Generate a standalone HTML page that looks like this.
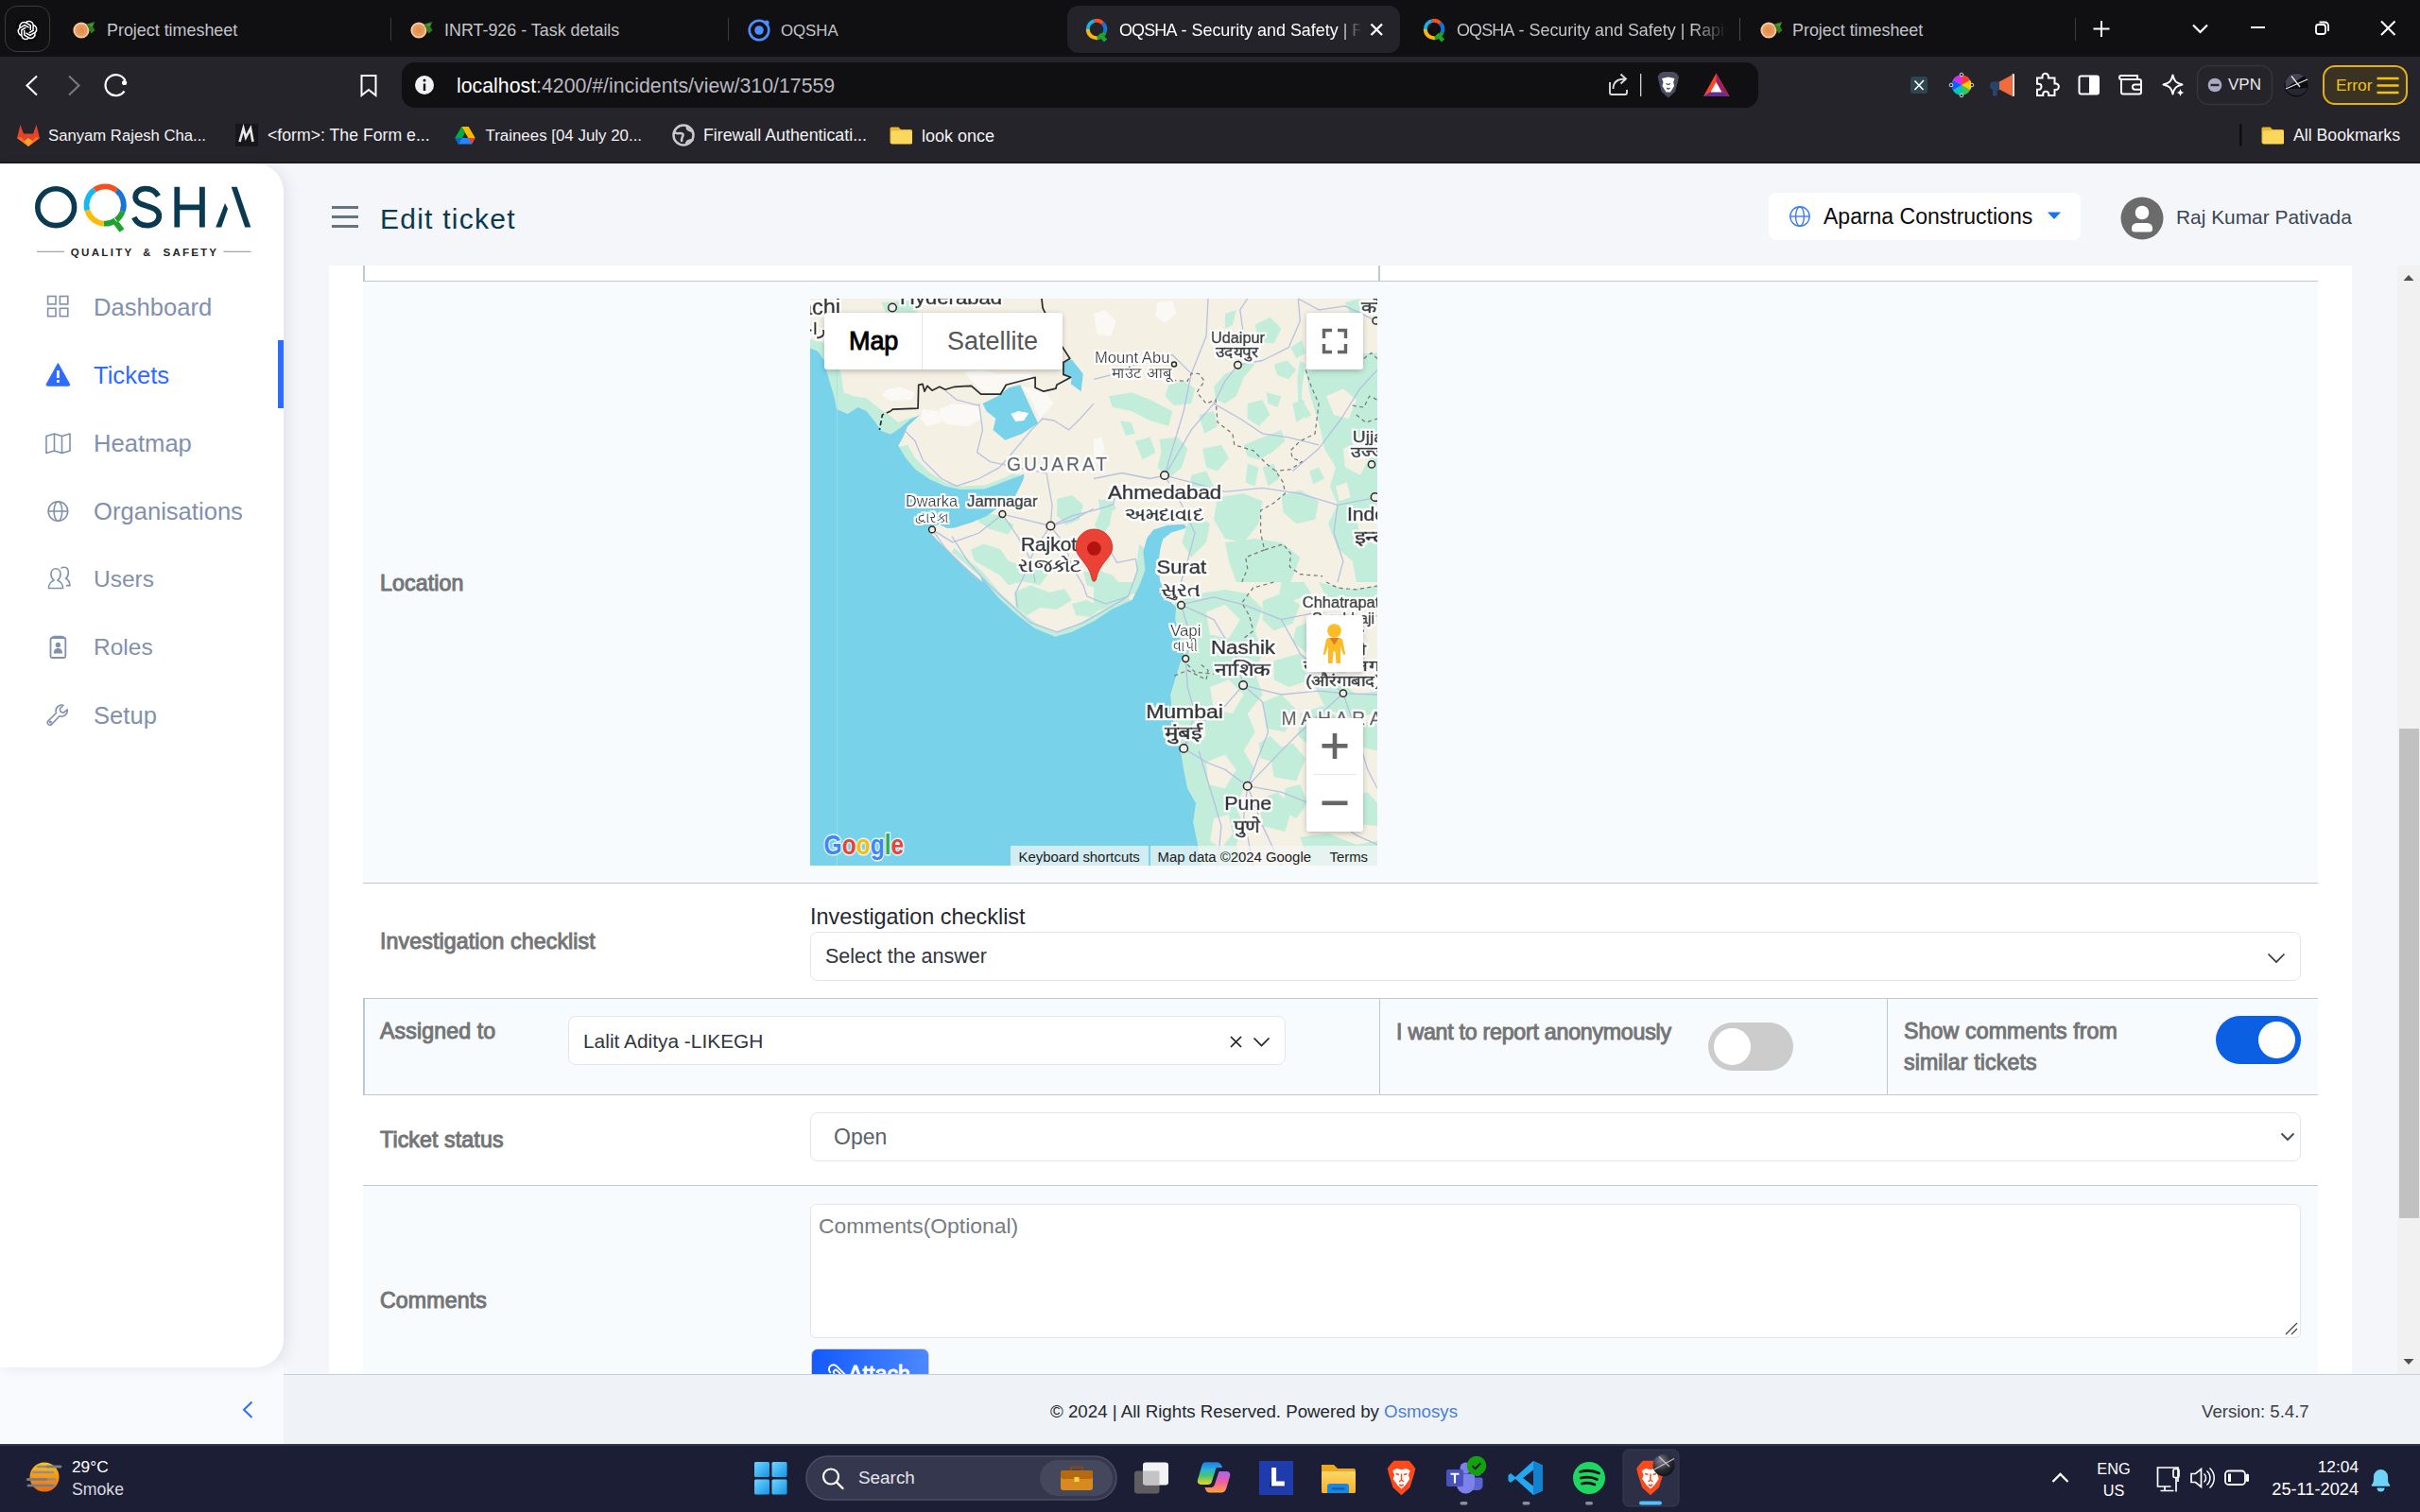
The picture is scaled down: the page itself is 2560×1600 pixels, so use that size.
<!DOCTYPE html>
<html lang="en">
<head>
<meta charset="utf-8">
<title>OQSHA - Security and Safety</title>
<style>
*{box-sizing:border-box;margin:0;padding:0}
html,body{width:2560px;height:1600px;overflow:hidden;background:#f4f6fa;font-family:"Liberation Sans",sans-serif;}
.abs{position:absolute}
#root{position:relative;width:2560px;height:1600px;overflow:hidden}
/* ---------- browser chrome ---------- */
#tabbar{left:0;top:0;width:2560px;height:60px;background:#101013}
#toolbar{left:0;top:60px;width:2560px;height:113px;background:#25242a}
.tabtxt{font-size:17.9px;line-height:1;color:#c4c4ca;white-space:nowrap;top:24.3px}
.bm{font-size:17.6px;line-height:1;color:#f2f2f4;white-space:nowrap;top:135px}
/* ---------- app ---------- */
#sidebar{left:0;top:173px;width:300px;height:1274px;background:#fff;border-radius:0 30px 30px 0;box-shadow:5px 2px 14px rgba(45,50,75,.085)}
.nav{font-size:25.6px;line-height:32px;color:#8290b0;left:99px;white-space:nowrap}
.lbl{font-size:23.2px;line-height:32px;color:#747577;-webkit-text-stroke:1px #747577;white-space:nowrap;letter-spacing:.1px}
.hl{background:#bfc9d2;height:1.3px}
.vl{background:#bfc9d2;width:1.3px}
.inp{background:#fff;border:1.5px solid #e3e6ea;border-radius:8px}
/* ---------- taskbar ---------- */
#taskbar{left:0;top:1528px;width:2560px;height:72px;background:#1c1e35}
.tb{color:#fff;font-size:18.5px;white-space:nowrap}
</style>
</head>
<body>
<div id="root">

<!-- ======= BROWSER CHROME ======= -->
<div id="tabbar" class="abs"></div>
<div id="toolbar" class="abs"></div>
<!--CHROME-START-->
<!-- tab strip -->
<div class="abs" style="left:5px;top:6px;width:48px;height:49px;border:1.5px solid #3a3a41;border-radius:13px"></div>
<div class="abs" style="left:17px;top:20px;width:24px;height:24px;border-radius:5px;background:#0b0b0d"></div>
<svg class="abs" style="left:17px;top:20px" width="24" height="24" viewBox="-12 -12 24 24" fill="none" stroke="#fff" stroke-width="1.5">
 <path d="M-1.5,-8.3 a4.6,4.6 0 0 1 7.6,2.2 l0,6.3 l-4.4,2.6"/>
 <g transform="rotate(60)"><path d="M-1.5,-8.3 a4.6,4.6 0 0 1 7.6,2.2 l0,6.3 l-4.4,2.6"/></g><g transform="rotate(120)"><path d="M-1.5,-8.3 a4.6,4.6 0 0 1 7.6,2.2 l0,6.3 l-4.4,2.6"/></g><g transform="rotate(180)"><path d="M-1.5,-8.3 a4.6,4.6 0 0 1 7.6,2.2 l0,6.3 l-4.4,2.6"/></g><g transform="rotate(240)"><path d="M-1.5,-8.3 a4.6,4.6 0 0 1 7.6,2.2 l0,6.3 l-4.4,2.6"/></g><g transform="rotate(300)"><path d="M-1.5,-8.3 a4.6,4.6 0 0 1 7.6,2.2 l0,6.3 l-4.4,2.6"/></g>
</svg>
<svg class="abs" style="left:0;top:0" width="2560" height="60">
 <g transform="translate(86,32)"><circle cx="0" cy="0" r="8.6" fill="#f3c9a2"/><circle cx="0" cy="0" r="6.6" fill="#e89a5e"/><circle cx="0" cy="0" r="3" fill="#e38f50"/>
   <path d="M5.5,-6.5 L14.5,-9 L12,-4 L14.5,0 L10.5,3.5 Z" fill="#2f7d1f"/><path d="M7,-6 L13,-7.5 L11.5,-3.5 Z" fill="#4c9a2a"/></g><g transform="translate(443,32)"><circle cx="0" cy="0" r="8.6" fill="#f3c9a2"/><circle cx="0" cy="0" r="6.6" fill="#e89a5e"/><circle cx="0" cy="0" r="3" fill="#e38f50"/>
   <path d="M5.5,-6.5 L14.5,-9 L12,-4 L14.5,0 L10.5,3.5 Z" fill="#2f7d1f"/><path d="M7,-6 L13,-7.5 L11.5,-3.5 Z" fill="#4c9a2a"/></g><g transform="translate(1871,32)"><circle cx="0" cy="0" r="8.6" fill="#f3c9a2"/><circle cx="0" cy="0" r="6.6" fill="#e89a5e"/><circle cx="0" cy="0" r="3" fill="#e38f50"/>
   <path d="M5.5,-6.5 L14.5,-9 L12,-4 L14.5,0 L10.5,3.5 Z" fill="#2f7d1f"/><path d="M7,-6 L13,-7.5 L11.5,-3.5 Z" fill="#4c9a2a"/></g>
 <rect x="413" y="19" width="1" height="24" fill="#3b3b41"/><rect x="770" y="19" width="1" height="24" fill="#3b3b41"/>
 <rect x="1840" y="19" width="1" height="24" fill="#4a4a50"/><rect x="2195" y="19" width="1" height="24" fill="#3b3b41"/>
 <!-- ionic icon -->
 <circle cx="803" cy="32" r="10.3" fill="none" stroke="#4d8dff" stroke-width="2.6"/><circle cx="803" cy="32" r="4.8" fill="#4d8dff"/><circle cx="811" cy="24" r="2.6" fill="#4d8dff"/>
 <!-- active tab -->
 <path d="M1129,18 a12,12 0 0 1 12,-12 h328 a12,12 0 0 1 12,12 v26 a12,12 0 0 1 -12,12 h-328 a12,12 0 0 1 -12,-12z" fill="#242329"/>
 <g transform="translate(1160,31)"><path d="M-9.2,0 A9.2,9.2 0 0 1 -2.4,-8.9" fill="none" stroke="#12b5ea" stroke-width="4"/>
   <path d="M-2.4,-8.9 A9.2,9.2 0 0 1 6.5,-6.5" fill="none" stroke="#f4511e" stroke-width="4"/>
   <path d="M6.5,-6.5 A9.2,9.2 0 0 1 8.6,3.3" fill="none" stroke="#1a73d9" stroke-width="4"/>
   <path d="M8.6,3.3 A9.2,9.2 0 0 1 0.8,9.2" fill="none" stroke="#1fa22e" stroke-width="4"/>
   <path d="M0.8,9.2 A9.2,9.2 0 0 1 -9.2,0" fill="none" stroke="#f7b614" stroke-width="4"/>
   <path d="M3.2,5.2 L9.6,12" stroke="#1fa22e" stroke-width="4.4" fill="none"/></g><g transform="translate(1517,31)"><path d="M-9.2,0 A9.2,9.2 0 0 1 -2.4,-8.9" fill="none" stroke="#12b5ea" stroke-width="4"/>
   <path d="M-2.4,-8.9 A9.2,9.2 0 0 1 6.5,-6.5" fill="none" stroke="#f4511e" stroke-width="4"/>
   <path d="M6.5,-6.5 A9.2,9.2 0 0 1 8.6,3.3" fill="none" stroke="#1a73d9" stroke-width="4"/>
   <path d="M8.6,3.3 A9.2,9.2 0 0 1 0.8,9.2" fill="none" stroke="#1fa22e" stroke-width="4"/>
   <path d="M0.8,9.2 A9.2,9.2 0 0 1 -9.2,0" fill="none" stroke="#f7b614" stroke-width="4"/>
   <path d="M3.2,5.2 L9.6,12" stroke="#1fa22e" stroke-width="4.4" fill="none"/></g>
 <path d="M1450.5,25.5 l11.500,11.500 M1462,25.5 l-11.500,11.500" stroke="#fff" stroke-width="2.3"/>
 <!-- window controls -->
 <path d="M2223,22 v17 M2214.5,30.500 h17" stroke="#fff" stroke-width="2"/>
 <path d="M2320,26.500 l7.500,7.500 l7.500,-7.500" stroke="#fff" stroke-width="2.2" fill="none"/>
 <path d="M2381,29 h15" stroke="#fff" stroke-width="2"/>
 <rect x="2450" y="26" width="10" height="10" rx="2.5" fill="none" stroke="#fff" stroke-width="1.8"/><path d="M2453.5,23.500 h6 a3.500,3.500 0 0 1 3.500,3.500 v6" fill="none" stroke="#fff" stroke-width="1.8"/>
 <path d="M2519,22.500 l14.500,14.500 M2533.500,22.500 l-14.500,14.500" stroke="#fff" stroke-width="2.1"/>
</svg>
<div class="abs tabtxt" style="left:113px">Project timesheet</div>
<div class="abs tabtxt" style="left:470px">INRT-926 - Task details</div>
<div class="abs tabtxt" style="left:826px;font-size:16.800px;top:25px">OQSHA</div>
<div class="abs tabtxt" style="left:1184px;color:#fff;width:258px;overflow:hidden;-webkit-mask-image:linear-gradient(90deg,#000 232px,transparent 256px);mask-image:linear-gradient(90deg,#000 232px,transparent 256px)"><span style="letter-spacing:-.800px">OQSHA</span> - Security and Safety | Rapid</div>
<div class="abs tabtxt" style="left:1541px;width:288px;overflow:hidden;-webkit-mask-image:linear-gradient(90deg,#000 250px,transparent 286px);mask-image:linear-gradient(90deg,#000 250px,transparent 286px)"><span style="letter-spacing:-.800px">OQSHA</span> - Security and Safety | Rapid</div>
<div class="abs tabtxt" style="left:1896px">Project timesheet</div>
<!-- toolbar -->
<div class="abs" style="left:425px;top:66px;width:1435px;height:48px;border-radius:14px;background:#101013"></div>
<svg class="abs" style="left:0;top:60px" width="2560" height="60" fill="none" stroke="#fff" stroke-width="2.1">
 <path d="M39,20.500 L28.500,30.500 L39,40.500"/><path d="M73,20.500 L83.500,30.500 L73,40.500" stroke="#77777d"/>
 <path d="M132.500,25.500 A11,11 0 1 0 131.500,36.500" stroke-width="2.2"/><circle cx="131.600" cy="27.500" r="2.600" fill="#fff" stroke="none"/>
 <path d="M382.500,20 h15 v21 l-7.500,-6 l-7.500,6z" stroke-width="2"/>
 <circle cx="449" cy="30" r="10" fill="#f2f2f4" stroke="none"/><rect x="447.800" y="28.500" width="2.400" height="7.500" fill="#101013" stroke="none"/><circle cx="449" cy="25" r="1.500" fill="#101013" stroke="none"/>
 <!-- share -->
 <path d="M1703,27 v11 a2,2 0 0 0 2,2 h14 a2,2 0 0 0 2,-2 v-3" stroke="#d9d9de" stroke-width="1.900"/><path d="M1706.500,34 c0,-7 5,-10.500 13,-10.500 M1714.500,18.500 l5.500,5 l-5.500,5" stroke="#d9d9de" stroke-width="1.900"/>
 <rect x="1735" y="18" width="1.300" height="24" fill="#d0d0d5" stroke="none"/>
 <!-- brave lion -->
 <path d="M1756,17.500 l3.500,-1.500 h10.500 l3.500,1.500 l2.500,3.500 l-1,5 l-3,11 l-7.200,6.500 l-7.200,-6.500 l-3,-11 l-1,-5z" fill="#4a4b5e" stroke="none"/>
 <path d="M1758,23 l6.800,-1.500 l6.800,1.500 l-1.500,4 l1,4 l-4,6.500 h-4.600 l-4,-6.500 l1,-4z" fill="#fff" stroke="none"/><path d="M1762.500,28.500 l2.300,1 l2.300,-1 M1763,33 l1.800,1.300 l1.800,-1.300" stroke="#4a4b5e" stroke-width="1.200"/>
 <!-- BAT -->
 <path d="M1815.500,17.500 L1829.500,42 L1802,42z" fill="#ff4724" stroke="none"/><path d="M1815.500,17.500 L1829.500,42 L1815.500,33z" fill="#9e1f63" stroke="none"/><path d="M1802,42 L1829.500,42 L1815.500,33z" fill="#662d91" stroke="none"/><path d="M1815.500,27 L1821.500,37.500 L1809.500,37.500z" fill="#fff" stroke="none"/>
 <!-- extension icons -->
 <rect x="2021" y="21" width="18" height="18" rx="3" fill="#2d464f" stroke="none"/><path d="M2025.500,25.500 l9,9.500 M2035,25 l-9.500,10" stroke="#fff" stroke-width="1.600"/>
 <circle cx="2075" cy="30" r="10.500" fill="#888" stroke="none"/>
 <path d="M2075,30 L2075,19.500 A10.500,10.500 0 0 1 2084.100,24.750z" fill="#ff3b30" stroke="none"/><path d="M2075,30 L2084.100,24.750 A10.500,10.500 0 0 1 2084.100,35.250z" fill="#ffcc00" stroke="none"/><path d="M2075,30 L2084.100,35.250 A10.500,10.500 0 0 1 2075,40.500z" fill="#34c759" stroke="none"/><path d="M2075,30 L2075,40.500 A10.500,10.500 0 0 1 2065.900,35.250z" fill="#00c7be" stroke="none"/><path d="M2075,30 L2065.900,35.250 A10.500,10.500 0 0 1 2065.900,24.750z" fill="#0a60ff" stroke="none"/><path d="M2075,30 L2065.900,24.750 A10.500,10.500 0 0 1 2075,19.500z" fill="#d52bff" stroke="none"/>
 <circle cx="2075" cy="19" r="1.800" fill="#222" stroke="#fff" stroke-width=".8"/><circle cx="2075" cy="41" r="1.800" fill="#222" stroke="#fff" stroke-width=".8"/><circle cx="2064" cy="30" r="1.800" fill="#222" stroke="#fff" stroke-width=".8"/><circle cx="2086" cy="30" r="1.800" fill="#222" stroke="#fff" stroke-width=".8"/>
 <path d="M2108,27 h6 l14,-7.500 v22 l-14,-7.500 h-6z" fill="#f26b3a" stroke="none"/><path d="M2108,26.500 h7 v9 h-2.500 v6 h-4.500 v-6.500 a4.500,4.500 0 0 1 0,-8.500z" fill="#27456b" stroke="none"/><rect x="2128.500" y="18" width="2.500" height="24" rx="1" fill="#ffd9c7" stroke="none"/>
 <path d="M2160.500,21 a3.200,3.200 0 0 1 6.400,0 v1.500 h6.600 v6 h1.200 a3.200,3.200 0 0 1 0,6.400 h-1.200 v6.100 h-6.300 v-1.300 a3,3 0 0 0 -6,0 v1.300 h-6.200 v-6.200 h1.500 a3,3 0 0 0 0,-6 h-1.500 v-6.300 h5.500z" stroke-width="2"/>
 <rect x="2199.500" y="20.500" width="20.500" height="19" rx="2" stroke-width="2"/><rect x="2210" y="20.500" width="10" height="19" fill="#fff" stroke="none"/>
 <path d="M2244,24 v13.500 a2,2 0 0 0 2,2 h17 a2,2 0 0 0 2,-2 v-11.500 a2,2 0 0 0 -2,-2 h-19 a2,2 0 0 1 0,-4 h17 v3.500 M2265,29.500 h-6.500 a2.600,2.600 0 0 0 0,5.200 h6.500" stroke-width="2"/>
 <path d="M2298.500,19.500 c1.500,6.500 3.500,8.500 10,10 c-6.500,1.500 -8.500,3.500 -10,10 c-1.500,-6.500 -3.500,-8.500 -10,-10 c6.500,-1.500 8.500,-3.500 10,-10z" stroke-width="2" stroke-linejoin="round"/><path d="M2306.500,34 c.6,2.500 1.400,3.300 4,4 c-2.600,.7 -3.400,1.500 -4,4 c-.6,-2.500 -1.400,-3.300 -4,-4 c2.600,-.7 3.400,-1.500 4,-4z" fill="#fff" stroke="none"/>
 <rect x="2324.500" y="9.500" width="79" height="41" rx="12" stroke="#34343b" stroke-width="1.500"/>
 <circle cx="2343" cy="30" r="7.300" fill="#a9a9c4" stroke="none"/><rect x="2338.500" y="28.800" width="9" height="2.400" fill="#25242a" stroke="none"/>
 <circle cx="2429" cy="30" r="12.500" fill="#0d0d11" stroke="none"/><path d="M2417.500,26 A12.500,12.500 0 0 1 2437,20.500 L2418,33z" fill="#5a5d6e" stroke="none" opacity=".7"/><path d="M2418,34 L2441,24 M2424,20.500 L2433,32" stroke="#e6e6ea" stroke-width="1.300"/><path d="M2418.500,34.500 A12,12 0 0 0 2440.500,33z" fill="#3c3f52" stroke="none" opacity=".55"/>
 <rect x="2458" y="10" width="88" height="40" rx="12" fill="#3a3323" stroke="#e2b110" stroke-width="2"/>
 <path d="M2514.500,23 h23 M2514.500,30.500 h23 M2514.500,38 h23" stroke="#f3c212" stroke-width="2.300"/>
</svg>
<div class="abs" style="left:483px;top:73.300px;font-size:21.300px;line-height:36px;color:#9b9ba3;white-space:nowrap"><span style="color:#fff">localhost</span><span style="color:#b9b9c0">:4200/#/incidents/view/310/17559</span></div>
<div class="abs" style="left:2357px;top:79px;font-size:17px;line-height:22px;color:#e8e8ec">VPN</div>
<div class="abs" style="left:2471px;top:79px;font-size:17.300px;line-height:22px;color:#f3c212">Error</div>
<!-- bookmarks bar -->
<svg class="abs" style="left:0;top:120px" width="2560" height="52">
 <!-- gitlab -->
 <path d="M30,35 L18,26 L21.500,12 L25,21.500 H35 L38.500,12 L42,26z" fill="#e24329"/><path d="M18,26 L30,35 L22.500,25z" fill="#fc6d26"/><path d="M42,26 L30,35 L37.500,25z" fill="#fc6d26"/><path d="M30,35 L25,29.500 L30,26 L35,29.500z" fill="#fca326"/>
 <rect x="249" y="11" width="24" height="24" fill="#17171b"/><path d="M253.500,30 l4,-14 l2.500,9.500 l5,-9.500 l2.500,14" fill="none" stroke="#e8e8ea" stroke-width="2.600"/>
 <!-- drive -->
 <path d="M488.300,14 h7.400 l7,12 h-7.400z" fill="#ffba00"/><path d="M488.300,14 l3.700,6.400 l-7,12.100 l-3.700,-6.500z" fill="#00ac47"/><path d="M488.500,26 h14.200 l-3.700,6.500 h-14.200z" fill="#2684fc"/><path d="M502.700,26 l-3.700,6.500 l-3.700,-6.500z" fill="#ea4335"/><path d="M481.300,26 l3.700,6.500 l3.500,-6.500z" fill="#0066da"/>
 <!-- globe -->
 <circle cx="723" cy="23" r="10.500" fill="#25242a" stroke="#c9c9cf" stroke-width="2.500"/><path d="M713.500,20 c4,3 7,-1 9,2 c1,3 -3,4 -1,8 M727,14 c-1,4 3,4 6,5 M726,33 c0,-4 4,-5 7.500,-5" fill="none" stroke="#c9c9cf" stroke-width="2.500"/>
 <g transform="translate(954,23)"><path d="M-11,-8.5 h7.5 l2.5,2.5 h10.5 a1.5,1.5 0 0 1 1.5,1.5 v12 a1.5,1.5 0 0 1 -1.5,1.5 h-20.5 a1.5,1.5 0 0 1 -1.5,-1.5 v-14.5 a1.5,1.5 0 0 1 1.5,-1.5z" fill="#e9b52a"/>
   <rect x="-11.5" y="-4.8" width="22.5" height="14.3" rx="1.5" fill="#fbd75b"/></g><g transform="translate(2405,23)"><path d="M-11,-8.5 h7.5 l2.5,2.5 h10.5 a1.5,1.5 0 0 1 1.5,1.5 v12 a1.5,1.5 0 0 1 -1.5,1.5 h-20.5 a1.5,1.5 0 0 1 -1.5,-1.5 v-14.5 a1.5,1.5 0 0 1 1.5,-1.5z" fill="#e9b52a"/>
   <rect x="-11.5" y="-4.8" width="22.5" height="14.3" rx="1.5" fill="#fbd75b"/></g>
 <rect x="2369" y="11" width="2.500" height="24" rx="1" fill="#0f0f12"/>
</svg>
<div class="abs bm" style="left:51px;font-size:16.700px;top:135.500px">Sanyam Rajesh Cha...</div>
<div class="abs bm" style="left:283px;font-size:17.700px">&lt;form&gt;: The Form e...</div>
<div class="abs bm" style="left:513.500px;font-size:16.900px;top:135.500px">Trainees [04 July 20...</div>
<div class="abs bm" style="left:744px;font-size:17.800px">Firewall Authenticati...</div>
<div class="abs bm" style="left:975px;font-size:18px">look once</div>
<div class="abs bm" style="left:2426px;font-size:17.700px">All Bookmarks</div>
<div class="abs" style="left:0;top:171px;width:2560px;height:2px;background:#1a1a1f"></div>
<!--CHROME-END-->

<!-- ======= APP ======= -->
<div id="app" class="abs" style="left:0;top:173px;width:2560px;height:1355px;background:#f4f6fa"></div>
<!--APP1-START-->
<!-- sidebar -->
<div class="abs" style="left:0;top:1440px;width:300px;height:88px;background:#f9fafe"></div>
<div id="sidebar" class="abs"></div>
<svg class="abs" style="left:0;top:173px" width="300" height="130" viewBox="0 173 300 130">
 <circle cx="59.2" cy="219.2" r="19.4" fill="none" stroke="#0a3a50" stroke-width="5.600"/>
 <g fill="none" stroke-width="5.800" transform="translate(111.200,217)">
  <path d="M-11.300,-16.100 A19.700,19.700 0 0 1 12.100,-15.500" stroke="#f4511e"/>
  <path d="M12.100,-15.500 A19.700,19.700 0 0 1 18.500,6.700" stroke="#1a73d9"/>
  <path d="M18.500,6.700 A19.700,19.700 0 0 1 -1.400,19.650" stroke="#1fa22e"/>
  <path d="M-1.400,19.650 A19.700,19.700 0 0 1 -18.900,5.400" stroke="#fbbc0a"/>
  <path d="M-18.900,5.400 A19.700,19.700 0 0 1 -11.300,-16.100" stroke="#12b9f5"/>
  <path d="M8.300,14.500 L17.800,27" stroke="#1fa22e" stroke-width="6"/>
  <path d="M8.800,12.500 L12.500,17.500" stroke="#fff" stroke-width="1"/>
 </g>
 <path d="M167.500,207.500 C164,201.500 158.500,199.600 154,199.600 C147.500,199.600 143.200,203.500 143.200,208.600 C143.200,220.500 168.300,215.500 168.300,228.600 C168.300,234.500 163,238.700 156,238.700 C149.500,238.700 144.300,235.500 141.800,230" fill="none" stroke="#0a3a50" stroke-width="5.800"/>
 <path d="M187.300,197.800 V240.600 M213.900,197.800 V240.600 M187.300,219.300 H213.900" fill="none" stroke="#0a3a50" stroke-width="5.800"/>
 <path d="M244.700,197.800 L250.700,197.800 L265.300,240.600 L259.200,240.600z" fill="#0a3a50"/>
 <path d="M228.200,240.600 L234.200,240.600 L241,221 L238,215z" fill="#0a3a50"/>
 <rect x="39" y="265.700" width="29" height="1.200" fill="#a0a0a0"/><rect x="236.500" y="265.700" width="29" height="1.200" fill="#a0a0a0"/>
 <text y="271.300" font-family="Liberation Sans, sans-serif" font-weight="bold" font-size="11.600" fill="#262626"><tspan x="74.800" textLength="64.500" lengthAdjust="spacing">QUALITY</tspan><tspan x="151.200" textLength="8" lengthAdjust="spacingAndGlyphs">&amp;</tspan><tspan x="172.500" textLength="56.500" lengthAdjust="spacing">SAFETY</tspan></text>
</svg>
<div class="abs" style="left:294px;top:360px;width:6px;height:72px;background:#2e6bff"></div>
<svg class="abs" style="left:40px;top:300px" width="50" height="480" viewBox="40 300 50 480" fill="none" stroke="#8290b0" stroke-width="1.600">
 <!-- dashboard -->
 <rect x="50.600" y="313.500" width="8.400" height="8.400"/><rect x="63.400" y="313.500" width="8.400" height="8.400"/><rect x="50.600" y="326.300" width="8.400" height="8.400"/><rect x="63.400" y="326.300" width="8.400" height="8.400"/>
 <!-- tickets (active) -->
 <path d="M61.400,384.500 L73.600,406.500 a1.200,1.200 0 0 1 -1,1.700 H50.200 a1.200,1.200 0 0 1 -1,-1.700z" fill="#2e6bff" stroke="#2e6bff" stroke-width="1" stroke-linejoin="round"/>
 <rect x="60" y="392" width="2.800" height="8" fill="#fff" stroke="none"/><rect x="60" y="402" width="2.800" height="2.800" fill="#fff" stroke="none"/>
 <!-- heatmap -->
 <path d="M49,461.500 L57.500,459 L65.500,461.500 L74,459 V477 L65.500,479.500 L57.500,477 L49,479.500z M57.500,459 V477 M65.500,461.500 V479.500" stroke-linejoin="round"/>
 <!-- organisations -->
 <circle cx="61.400" cy="541" r="10.300"/><ellipse cx="61.400" cy="541" rx="4.300" ry="10.300"/><path d="M51.100,541 H71.700"/>
 <!-- users -->
 <path d="M51.500,622.500 c0,-6 3,-7 5.500,-8.500 c-2.500,-2 -3,-4 -3,-6.500 c0,-3.500 2.200,-5.800 5,-5.800 s5,2.300 5,5.800 c0,2.500 -.5,4.500 -3,6.500 c2.500,1.500 5.500,2.500 5.500,8.500z"/>
 <path d="M64.500,601.500 c1,-.8 2,-1.200 3.200,-1.200 c2.800,0 4.600,2.300 4.600,5.600 c0,2.600 -.6,4.500 -2.600,6.200 c2,1.300 4.200,2.500 4.200,7.500 h-4"/>
 <!-- roles -->
 <rect x="53.500" y="675" width="15.800" height="21" rx="1.500" stroke-width="1.800"/><path d="M56,675 v-2 M66.800,675 v-2 M57,673.500 h9" stroke-width="1.600"/>
 <circle cx="61.400" cy="682.500" r="2.700" fill="#8290b0" stroke="none"/><path d="M56.800,691.500 c0,-4 2,-5.500 4.600,-5.500 s4.600,1.500 4.600,5.500z" fill="#8290b0" stroke="none"/>
 <!-- setup -->
 <path d="M71.200,750.800 a6.300,6.300 0 0 1 -8.300,7 l-8.200,8.600 a2.500,2.500 0 0 1 -3.700,-3.500 l8.500,-8.400 a6.300,6.300 0 0 1 7.400,-8.300 l-3.600,3.800 l.8,3.300 l3.300,.9z" stroke-linejoin="round"/><circle cx="53.300" cy="764" r=".8"/>
</svg>
<div class="abs nav" style="top:309px">Dashboard</div>
<div class="abs nav" style="top:381px;color:#2e6bff">Tickets</div>
<div class="abs nav" style="top:453px">Heatmap</div>
<div class="abs nav" style="top:525px">Organisations</div>
<div class="abs nav" style="top:597px;font-size:24.500px">Users</div>
<div class="abs nav" style="top:669px;font-size:24.500px">Roles</div>
<div class="abs nav" style="top:741px">Setup</div>
<svg class="abs" style="left:250px;top:1478px" width="24" height="28" fill="none" stroke="#2e6bff" stroke-width="2"><path d="M16.500,5.500 L8,13.700 L16.500,22"/></svg>
<!-- header -->
<div class="abs" style="left:351px;top:218.2px;width:27.500px;height:2.800px;background:#66747f"></div>
<div class="abs" style="left:351px;top:228.3px;width:27.500px;height:2.800px;background:#66747f"></div>
<div class="abs" style="left:351px;top:238.3px;width:27.500px;height:2.800px;background:#66747f"></div>
<div class="abs" style="left:402px;top:212px;font-size:30px;line-height:40px;color:#0a3a50;white-space:nowrap;letter-spacing:1.250px">Edit ticket</div>
<div class="abs" style="left:1871px;top:204px;width:330px;height:50px;background:#fff;border-radius:8px"></div>
<svg class="abs" style="left:1890px;top:215px" width="28" height="28" viewBox="-14 -14 28 28" fill="none" stroke="#3b7ff0" stroke-width="1.400"><circle r="10.200"/><ellipse rx="4.400" ry="10.200"/><path d="M-10.200,0 H10.200"/></svg>
<div class="abs" style="left:1929px;top:211px;font-size:23px;line-height:36px;color:#0c0c0c;white-space:nowrap">Aparna Constructions</div>
<svg class="abs" style="left:2165px;top:223px" width="16" height="10"><path d="M1,1.500 H15 L8,9z" fill="#1a73e8"/></svg>
<svg class="abs" style="left:2243px;top:208px" width="46" height="46" viewBox="-23 -23 46 46"><circle r="22.500" fill="#6b6b6b"/><circle cy="-6" r="7.300" fill="#fff"/><path d="M-11,10.500 a5.500,5.500 0 0 1 5.500,-5.500 h11 a5.500,5.500 0 0 1 5.500,5.500 v1 a3,3 0 0 1 -3,3 h-16 a3,3 0 0 1 -3,-3z" fill="#fff"/></svg>
<div class="abs" style="left:2302px;top:212px;font-size:20.900px;line-height:36px;color:#3a4555;white-space:nowrap">Raj Kumar Pativada</div>
<!--APP1-END-->
<!--APP2-START-->
<!-- card -->
<div class="abs" style="left:348px;top:281px;width:2140px;height:1173px;background:#fff"></div>
<!-- striped rows -->
<div class="abs" style="left:384px;top:298px;width:2068px;height:636px;background:#f8fbfe"></div>
<div class="abs" style="left:384px;top:1056px;width:2068px;height:103px;background:#f8fbfe"></div>
<div class="abs" style="left:384px;top:1255px;width:2068px;height:199px;background:#f8fbfe"></div>
<!-- lines -->
<div class="abs hl" style="left:384px;top:297px;width:2068px"></div>
<div class="abs vl" style="left:384px;top:281px;height:16px;width:1.500px"></div>
<div class="abs vl" style="left:1458px;top:281px;height:16px;width:1.500px"></div>
<div class="abs hl" style="left:384px;top:933.500px;width:2068px"></div>
<div class="abs hl" style="left:384px;top:1055.500px;width:2068px;height:1.500px"></div>
<div class="abs hl" style="left:384px;top:1157.500px;width:2068px;height:1.300px"></div>
<div class="abs vl" style="left:384px;top:1056px;height:102px;width:1.500px"></div>
<div class="abs vl" style="left:1458.500px;top:1056px;height:102px;width:1.500px"></div>
<div class="abs vl" style="left:1995.500px;top:1056px;height:102px;width:1.500px"></div>
<div class="abs hl" style="left:384px;top:1253.500px;width:2068px;height:1.500px"></div>
<!-- labels -->
<div class="abs lbl" style="left:402px;top:601px">Location</div>
<div class="abs lbl" style="left:402px;top:980px">Investigation checklist</div>
<div class="abs lbl" style="left:402px;top:1075px">Assigned to</div>
<div class="abs lbl" style="left:402px;top:1190px">Ticket status</div>
<div class="abs lbl" style="left:402px;top:1360px">Comments</div>
<div class="abs lbl" style="left:1477px;top:1075.500px;letter-spacing:-.250px">I want to report anonymously</div>
<div class="abs lbl" style="left:2014px;top:1075px">Show comments from</div>
<div class="abs lbl" style="left:2014px;top:1108px">similar tickets</div>
<!-- investigation checklist -->
<div class="abs" style="left:857px;top:953.800px;font-size:23.400px;line-height:32px;color:#24292f;white-space:nowrap">Investigation checklist</div>
<div class="abs inp" style="left:857px;top:986px;width:1577px;height:52px"></div>
<div class="abs" style="left:873px;top:996.200px;font-size:21.500px;line-height:32px;color:#30363c;white-space:nowrap">Select the answer</div>
<svg class="abs" style="left:2396px;top:1004px" width="24" height="20" fill="none" stroke="#30363c" stroke-width="1.700"><path d="M3.500,5.500 L12,14 L20.500,5.500"/></svg>
<!-- assigned to -->
<div class="abs inp" style="left:601px;top:1075px;width:759px;height:52px"></div>
<div class="abs" style="left:617px;top:1086px;font-size:20.900px;line-height:32px;color:#30363c;white-space:nowrap">Lalit Aditya -LIKEGH</div>
<svg class="abs" style="left:1298px;top:1092px" width="50" height="22" fill="none" stroke="#1c1f23" stroke-width="1.700"><path d="M4,5 L15,16 M15,5 L4,16"/><path d="M28.500,6.500 L36.500,14.500 L44.500,6.500"/></svg>
<!-- toggles -->
<div class="abs" style="left:1807px;top:1082px;width:90px;height:51px;border-radius:26px;background:#cccccc"></div>
<div class="abs" style="left:1813px;top:1088px;width:39px;height:39px;border-radius:50%;background:#fff"></div>
<div class="abs" style="left:2344px;top:1075px;width:90px;height:51px;border-radius:26px;background:#0b5fe3"></div>
<div class="abs" style="left:2388.500px;top:1081px;width:39px;height:39px;border-radius:50%;background:#fff"></div>
<!-- ticket status -->
<div class="abs inp" style="left:857px;top:1177px;width:1577px;height:52px"></div>
<div class="abs" style="left:882px;top:1187px;font-size:23px;line-height:32px;color:#5a6169;white-space:nowrap">Open</div>
<svg class="abs" style="left:2408px;top:1194px" width="24" height="18" fill="none" stroke="#4a525a" stroke-width="2.100"><path d="M5.500,5.500 L12,12 L18.500,5.500"/></svg>
<!-- comments -->
<div class="abs inp" style="left:857px;top:1274px;width:1577px;height:142px;border-radius:6px"></div>
<div class="abs" style="left:866px;top:1281px;font-size:22.900px;line-height:32px;color:#767c83;white-space:nowrap">Comments(Optional)</div>
<svg class="abs" style="left:2414px;top:1396px" width="18" height="18" fill="none" stroke="#444" stroke-width="1.300"><path d="M4,16 L16,4 M10,16 L16,10"/></svg>
<!-- attach button (clipped by footer) -->
<div class="abs" style="left:857.500px;top:1427.300px;width:125px;height:27px;overflow:hidden"><div style="width:125px;height:52px;border-radius:7px;border:1px solid #d9ccb4;background:linear-gradient(100deg,#1259ff,#4f8bff);color:#fff;-webkit-text-stroke:1px #fff;font-size:23.300px;line-height:52px;padding-left:38.500px;white-space:nowrap">Attach</div>
<svg style="position:absolute;left:0;top:1.300px" width="60" height="40" fill="none" stroke="#fff" stroke-width="1.900" stroke-linecap="round"><path d="M20.300,23.300 a4.700,4.700 0 0 1 6.650,-6.650 l13,13"/><path d="M24.500,24.300 a2.100,2.100 0 0 1 3,-3 l9,9"/></svg></div>
<!-- scrollbar -->
<div class="abs" style="left:2536px;top:281px;width:24px;height:1173px;background:#f1f1f1"></div>
<div class="abs" style="left:2538px;top:771px;width:21px;height:518px;background:#c1c1c1"></div>
<svg class="abs" style="left:2536px;top:281px" width="24" height="24"><path d="M6.500,16 L12,10 L17.500,16z" fill="#505050"/></svg>
<svg class="abs" style="left:2536px;top:1429px" width="24" height="24"><path d="M6.500,9 L12,15 L17.500,9z" fill="#505050"/></svg>
<!-- footer -->
<div class="abs" style="left:300px;top:1453.500px;width:2260px;height:75px;background:#eff2f6;border-top:1.500px solid #c5cdd6"></div>
<div class="abs" style="left:1111px;top:1478px;font-size:18.700px;line-height:32px;color:#24292f;white-space:nowrap">© 2024 | All Rights Reserved. Powered by <span style="color:#4a7fd6">Osmosys</span></div>
<div class="abs" style="left:2329px;top:1478px;font-size:18.600px;line-height:32px;color:#3a4047;white-space:nowrap">Version: 5.4.7</div>
<!--MAP-START-->
<svg class="abs" style="left:857px;top:316px" width="600" height="600" viewBox="0 0 600 600" font-family="Liberation Sans, sans-serif">
<rect width="600" height="600" fill="#f5f0e4"/>
<g fill="#fbf9f5"><path d="M136.9,117.1 L150.8,111.1 L178.6,114.1 L181.5,127.0 L166.7,134.9 L144.8,132.9 L136.9,127.0z"/><path d="M79.4,97.2 L93.3,93.3 L111.1,99.2 L107.1,107.1 L85.3,108.1 L76.4,103.2z"/><path d="M162.7,77.4 L182.5,75.4 L198.4,79.4 L234.1,79.4 L236.1,87.3 L210.3,89.3 L200.4,99.2 L184.5,99.2 L172.6,89.3z"/><path d="M224.2,93.3 L238.1,95.2 L250.0,99.2 L257.9,111.1 L242.1,127.0 L236.1,111.1z"/><path d="M119.0,117.1 L134.9,119.0 L138.9,131.0 L123.0,134.9 L117.1,127.0z"/><path d="M300.0,15.9 L311.9,11.9 L323.8,23.8 L317.9,39.7 L304.0,37.7z"/><path d="M367.5,4.0 L383.3,2.0 L387.3,15.9 L375.4,25.8 L365.5,17.9z"/><path d="M300.0,148.8 L307.9,146.8 L311.9,158.7 L306.0,174.6 L300.0,174.6z"/></g>
<g fill="#c2eddb"><path d="M0.0,42.7 L13.9,46.6 L25.8,59.5 L32.7,79.4 L35.7,99.2 L45.6,103.2 L59.5,105.2 L71.4,115.1 L83.3,123.0 L93.3,131.0 L103.2,127.0 L111.1,125.0 L107.1,131.0 L95.2,138.9 L85.3,144.8 L75.4,140.9 L67.5,131.0 L57.5,121.0 L39.7,124.0 L26.8,119.0 L18.8,87.3 L13.9,65.5 L6.0,56.5 L0.0,53.6z"/><path d="M19.8,75.4 L24.8,73.4 L26.8,83.3 L21.8,87.3z"/><path d="M47.6,107.1 L63.5,111.1 L59.5,117.1 L49.6,115.1z"/><path d="M75.4,4.0 L103.2,2.0 L119.0,7.9 L111.1,15.9 L93.3,17.9 L79.4,13.9z"/><path d="M93.3,156.7 L103.2,154.8 L111.1,168.7 L127.0,184.5 L142.9,194.4 L158.7,198.4 L184.5,197.4 L198.4,192.5 L214.3,185.5 L222.2,186.5 L214.3,190.5 L198.4,197.4 L184.5,202.0 L158.7,202.4 L142.9,199.0 L127.0,192.1 L111.1,181.2 L101.2,169.2z"/><path d="M169.8,265.5 L183.7,259.5 L201.6,265.5 L209.5,277.4 L225.4,283.3 L243.3,279.4 L253.2,289.3 L243.3,303.2 L225.4,299.2 L209.5,303.2 L201.6,293.3 L183.7,283.3 L173.8,277.4z"/><path d="M215.5,311.1 L233.3,303.2 L253.2,311.1 L269.0,307.1 L277.0,319.0 L261.1,329.0 L243.3,327.0 L229.4,334.9 L217.5,327.0z"/><path d="M288.9,289.3 L304.8,287.3 L320.6,293.3 L328.6,303.2 L320.6,311.1 L304.8,307.1 L292.9,303.2z"/><path d="M261.1,211.9 L277.0,207.9 L288.9,217.9 L284.9,233.7 L271.0,239.7 L261.1,229.8z"/><path d="M304.8,211.9 L320.6,217.9 L316.7,239.7 L308.7,251.6 L300.8,239.7 L306.7,225.8z"/><path d="M150.0,268.5 L179.8,294.2 L199.6,318.1 L219.4,335.9 L237.3,349.8 L259.1,358.7 L277.0,353.8 L300.8,341.9 L318.7,330.0 L340.5,320.0 L336.5,317.1 L316.7,325.0 L296.8,336.9 L277.0,347.8 L259.1,352.8 L239.3,343.8 L221.4,330.0 L201.6,312.1 L181.7,288.3 L152.0,263.5z"/><path d="M277.0,323.0 L292.9,319.0 L308.7,327.0 L296.8,336.9 L281.0,334.9z"/><path d="M179.8,225.8 L201.6,229.8 L215.5,239.7 L209.5,249.6 L189.7,243.7 L177.8,235.7z"/><path d="M348.4,259.5 L354.4,265.5 L355.4,287.3 L349.4,303.2 L344.4,313.1 L338.5,311.1 L345.4,289.3 L346.4,271.4z"/><path d="M524.2,75.4 L538.1,65.5 L557.9,59.5 L600.0,57.5 L600.0,300.0 L577.8,300.0 L573.8,277.8 L557.9,263.9 L548.0,238.1 L557.9,218.3 L550.0,198.4 L556.0,178.6 L544.0,158.7 L540.1,138.9 L534.1,119.0 L528.2,99.2z"/><path d="M427.0,93.3 L438.9,79.4 L450.8,75.4 L462.7,65.5 L470.6,69.4 L458.7,83.3 L450.8,103.2 L438.9,111.1 L429.0,107.1z"/><path d="M379.4,91.3 L395.2,87.3 L407.1,95.2 L403.2,111.1 L385.3,113.1 L375.4,103.2z"/><path d="M315.9,103.2 L339.7,99.2 L359.5,107.1 L383.3,119.0 L379.4,134.9 L359.5,129.0 L339.7,119.0 L319.8,115.1z"/><path d="M327.8,129.0 L339.7,131.0 L343.7,142.9 L333.7,144.8z"/><path d="M369.4,148.8 L389.3,146.8 L399.2,158.7 L393.3,178.6 L379.4,190.5 L367.5,178.6 L371.4,162.7z"/><path d="M415.1,158.7 L434.9,154.8 L442.9,168.7 L431.0,182.5 L419.0,178.6z"/><path d="M458.7,154.8 L478.6,146.8 L498.4,138.9 L502.4,150.8 L488.5,162.7 L474.6,170.6 L462.7,166.7z"/><path d="M482.5,99.2 L498.4,103.2 L494.4,115.1 L484.5,111.1z"/><path d="M490.5,69.4 L504.4,65.5 L514.3,75.4 L506.3,85.3 L494.4,81.3z"/><path d="M438.9,15.9 L450.8,11.9 L446.8,27.8 L438.9,31.7z"/><path d="M508.3,51.6 L520.2,43.7 L524.2,57.5 L514.3,63.5z"/><path d="M565.9,4.0 L581.7,0.0 L585.7,13.9 L573.8,21.8z"/><path d="M431.0,210.3 L458.7,206.3 L478.6,214.3 L474.6,238.1 L458.7,257.9 L438.9,254.0 L427.0,234.1z"/><path d="M438.9,257.9 L470.6,254.0 L498.4,257.9 L518.3,273.8 L508.3,300.0 L450.8,300.0 L442.9,277.8z"/><path d="M498.4,208.3 L518.3,202.4 L538.1,214.3 L534.1,234.1 L514.3,238.1 L500.4,226.2z"/><path d="M407.1,228.2 L423.0,238.1 L419.0,257.9 L403.2,273.8 L393.3,257.9 L399.2,238.1z"/><path d="M518.3,65.5 L524.2,69.4 L520.2,95.2 L520.2,107.1 L530.2,123.0 L524.2,127.0 L516.3,111.1 L515.3,83.3z"/><path d="M306.0,214.3 L317.9,210.3 L323.8,222.2 L311.9,230.2z"/><path d="M462.7,174.6 L474.6,178.6 L470.6,198.4 L460.7,194.4z"/><path d="M528.2,182.5 L538.1,178.6 L544.0,190.5 L532.1,196.4z"/><path d="M379.4,325.8 L391.3,319.8 L411.1,311.9 L438.9,307.9 L462.7,311.9 L478.6,327.8 L470.6,351.6 L478.6,375.4 L470.6,395.2 L478.6,419.0 L462.7,438.9 L470.6,458.7 L458.7,478.6 L470.6,498.4 L458.7,518.3 L450.8,538.1 L458.7,557.9 L450.8,577.8 L458.7,600.0 L414.1,600.0 L410.1,577.8 L405.2,554.0 L408.1,534.1 L399.2,518.3 L395.2,498.4 L391.3,474.6 L383.3,442.9 L381.3,419.0 L387.3,399.2 L393.3,379.4 L385.3,359.5z"/><path d="M478.6,319.8 L498.4,311.9 L518.3,323.8 L510.3,343.7 L490.5,351.6 L478.6,339.7z"/><path d="M490.5,383.3 L518.3,375.4 L538.1,387.3 L530.2,403.2 L506.3,411.1 L490.5,403.2z"/><path d="M478.6,427.0 L498.4,419.0 L514.3,434.9 L502.4,458.7 L482.5,454.8z"/><path d="M486.5,478.6 L510.3,470.6 L524.2,486.5 L514.3,510.3 L490.5,506.3z"/><path d="M474.6,530.2 L494.4,522.2 L510.3,538.1 L502.4,563.9 L478.6,557.9z"/><path d="M534.1,411.1 L557.9,403.2 L577.8,419.0 L600.0,415.1 L600.0,438.9 L573.8,442.9 L546.0,434.9z"/><path d="M518.3,569.8 L548.0,565.9 L577.8,577.8 L600.0,573.8 L600.0,600.0 L528.2,600.0z"/><path d="M538.1,300.0 L567.9,307.9 L600.0,304.0 L600.0,317.9 L573.8,323.8 L546.0,315.9z"/><path d="M300.0,300.0 L342.7,300.0 L341.7,311.9 L323.8,323.8 L306.0,329.8 L300.0,325.8z"/><path d="M514.3,347.6 L534.1,339.7 L557.9,351.6 L550.0,371.4 L526.2,375.4 L510.3,363.5z"/><path d="M518.3,438.9 L542.1,431.0 L561.9,446.8 L557.9,470.6 L534.1,478.6 L516.3,462.7z"/><path d="M534.1,490.5 L557.9,482.5 L581.7,498.4 L573.8,522.2 L546.0,526.2 L530.2,510.3z"/><path d="M502.4,518.3 L518.3,514.3 L526.2,534.1 L514.3,550.0 L500.4,542.1z"/><path d="M474.6,470.6 L486.5,462.7 L498.4,474.6 L490.5,490.5 L476.6,486.5z"/><path d="M567.9,528.2 L589.7,522.2 L600.0,534.1 L600.0,557.9 L577.8,556.0z"/><path d="M573.8,450.8 L600.0,446.8 L600.0,478.6 L581.7,474.6z"/><path d="M498.4,300.0 L522.2,300.0 L530.2,311.9 L510.3,319.8 L496.4,311.9z"/><path d="M470.6,27.8 L486.5,19.8 L498.4,31.7 L490.5,47.6 L474.6,45.6z"/><path d="M403.2,186.5 L419.0,182.5 L427.0,198.4 L415.1,210.3 L401.2,202.4z"/><path d="M478.6,178.6 L490.5,174.6 L496.4,190.5 L484.5,198.4z"/><path d="M510.3,111.1 L522.2,107.1 L526.2,123.0 L514.3,131.0z"/><path d="M343.7,150.8 L359.5,146.8 L365.5,162.7 L351.6,170.6z"/><path d="M411.1,123.0 L427.0,119.0 L431.0,134.9 L417.1,142.9z"/><path d="M462.7,111.1 L478.6,107.1 L486.5,123.0 L474.6,134.9 L462.7,127.0z"/></g>
<g fill="#f5f0e4"><path d="M546.0,103.2 L563.9,95.2 L577.8,107.1 L569.8,127.0 L554.0,123.0z"/><path d="M563.9,158.7 L581.7,150.8 L593.7,166.7 L581.7,186.5 L565.9,178.6z"/><path d="M577.8,228.2 L600.0,218.3 L600.0,257.9 L581.7,254.0z"/><path d="M556.0,198.4 L567.9,194.4 L571.8,210.3 L559.9,214.3z"/><path d="M419.0,331.7 L438.9,323.8 L454.8,339.7 L442.9,359.5 L423.0,355.6z"/><path d="M423.0,411.1 L442.9,403.2 L458.7,419.0 L446.8,438.9 L427.0,434.9z"/><path d="M419.0,490.5 L438.9,482.5 L450.8,498.4 L438.9,518.3 L421.0,514.3z"/><path d="M427.0,550.0 L442.9,546.0 L446.8,565.9 L434.9,581.7 L423.0,573.8z"/><path d="M403.2,450.8 L415.1,446.8 L419.0,462.7 L409.1,470.6z"/></g>
<path d="M0.0,52.6 L7.9,55.6 L14.9,65.5 L19.8,85.3 L25.8,105.2 L27.8,117.1 L39.7,122.0 L50.6,115.1 L59.5,119.0 L67.5,129.0 L75.4,139.9 L85.3,143.8 L95.2,136.9 L107.1,127.0 L116.1,123.0 L103.2,134.9 L98.2,146.8 L93.3,155.8 L101.2,168.7 L111.1,180.6 L127.0,191.5 L142.9,198.4 L158.7,202.0 L184.5,201.4 L198.4,196.4 L216.3,189.5 L226.2,185.5 L226.2,189.5 L222.2,198.4 L217.3,208.3 L200.4,220.2 L186.5,230.2 L170.6,237.1 L152.8,242.5 L144.8,243.1 L136.9,239.1 L129.0,241.1 L126.6,247.0 L134.9,256.0 L150.8,271.8 L170.6,289.7 L182.5,300.0 L179.8,293.3 L199.6,317.1 L219.4,334.9 L237.3,348.8 L259.1,357.7 L277.0,352.8 L300.8,340.9 L318.7,329.0 L340.5,319.0 L343.5,313.1 L348.4,303.2 L354.4,287.3 L352.4,267.5 L356.3,253.6 L363.3,244.6 L378.2,239.7 L396.0,238.7 L398.0,242.7 L382.1,247.6 L373.2,254.6 L370.2,265.5 L368.3,283.3 L370.2,299.2 L378.2,317.1 L387.1,327.0 L386.1,338.9 L391.1,358.7 L395.6,378.6 L393.3,379.4 L387.3,399.2 L381.3,419.0 L383.3,442.9 L391.3,474.6 L395.2,498.4 L399.2,518.3 L408.1,534.1 L405.2,554.0 L410.1,577.8 L414.1,600.0 L0,600z" fill="#78d2e9"/>
<path d="M182.5,111.1 L198.4,103.2 L210.3,94.2 L222.2,91.3 L241.1,131.9 L224.2,142.9 L206.3,149.8 L193.5,138.9 L196.4,127.0 L186.5,119.0z" fill="#78d2e9"/><path d="M212.3,122.0 L220.2,119.0 L231.2,121.0 L226.2,129.0 L217.3,130.0z" fill="#fff"/><path d="M267.9,67.5 L276.8,64.5 L288.7,79.4 L286.7,98.2 L275.8,90.3 L276.8,82.3 L267.9,80.4z" fill="#78d2e9"/>
<g fill="none" stroke="#b4bfe2" stroke-width="1.300" stroke-linejoin="round" opacity=".95"><path d="M99.2,138.9 L111.1,150.8 L119.0,170.6 L138.9,190.5 L154.8,198.4 L178.6,190.5 L200.4,178.6 L214.3,162.7 L234.1,138.9 L246.0,127.0 L257.9,129.0 L273.8,138.9 L285.7,127.0 L300.0,111.1"/><path d="M178.6,111.1 L182.5,138.9 L176.6,162.7 L190.5,172.6 L218.3,178.6 L250.0,184.5 L256.0,218.3 L254.4,240.5"/><path d="M142.9,97.2 L154.8,107.1 L178.6,113.1"/><path d="M129.0,244.4 L150.8,257.9 L178.6,248.0 L203.4,228.2 L228.2,234.1 L254.4,240.5 L277.8,234.1 L300.0,222.2"/><path d="M129.0,244.4 L142.9,263.9 L162.7,283.7 L178.6,300.0"/><path d="M203.4,228.2 L218.3,250.0 L234.1,277.8 L238.1,300.0"/><path d="M150.0,251.6 L167.9,279.4 L189.7,303.2 L215.5,327.0 L233.3,342.9 L261.1,352.8 L288.9,342.9 L316.7,327.0 L336.5,315.1 L346.4,287.3 L344.4,275.4 L324.6,279.4 L316.7,265.5"/><path d="M254.2,240.7 L269.0,259.5 L277.0,283.3 L288.9,303.2 L292.9,315.1 L312.7,323.0 L336.5,315.1"/><path d="M254.2,240.7 L237.3,265.5 L225.4,295.2 L217.5,311.1 L219.4,327.0"/><path d="M254.2,240.7 L277.0,229.8 L300.8,223.8 L320.6,217.9 L324.6,200.0"/><path d="M375.0,187.1 L359.5,190.5 L329.8,184.5 L300.0,190.5"/><path d="M375.0,187.1 L387.3,166.7 L403.2,138.9 L427.0,111.1 L438.9,87.3 L452.4,70.2 L458.7,39.7 L454.8,11.9 L462.7,0.0"/><path d="M375.0,187.1 L383.3,158.7 L395.2,119.0 L403.2,79.4 L419.0,39.7 L421.0,0.0"/><path d="M375.0,187.1 L403.2,194.4 L438.9,204.4 L478.6,200.4 L518.3,206.3 L557.9,218.3 L600.0,210.3"/><path d="M375.0,187.1 L393.3,218.3 L407.1,248.0 L399.2,277.8 L392.3,300.0"/><path d="M300.0,85.3 L323.8,79.4 L351.6,65.5 L383.3,59.5 L403.2,79.4"/><path d="M452.4,70.2 L478.6,65.5 L506.3,51.6 L518.3,23.8 L516.3,0.0"/><path d="M510.3,182.5 L538.1,158.7 L561.9,127.0 L581.7,95.2 L600.0,75.4"/><path d="M427.0,111.1 L454.8,127.0 L478.6,142.9 L506.3,146.8 L538.1,154.8"/><path d="M516.3,0.0 L538.1,11.9 L565.9,7.9 L598.6,23.4"/><path d="M392.3,323.8 L403.2,359.5 L397.2,381.0 L399.2,411.1 L407.1,438.9 L395.2,476.0"/><path d="M392.3,323.8 L427.0,339.7 L450.8,379.4 L458.1,409.1 L478.6,427.0 L484.5,458.7 L470.6,494.4 L462.7,515.7 L458.7,548.0 L468.7,600.0"/><path d="M395.2,476.0 L419.0,490.5 L438.9,498.4 L462.7,515.7 L498.4,522.2 L538.1,538.1 L577.8,567.9 L600.0,577.8"/><path d="M458.1,409.1 L498.4,419.0 L538.1,415.1 L563.9,417.7 L600.0,419.0"/><path d="M458.1,409.1 L438.9,431.0 L411.1,450.8 L395.2,476.0"/><path d="M392.3,323.8 L427.0,315.9 L458.7,323.8 L498.4,339.7 L518.3,375.4 L563.9,417.7"/><path d="M462.7,515.7 L498.4,478.6 L518.3,458.7 L563.9,417.7"/><path d="M462.7,515.7 L478.6,557.9 L498.4,600.0"/><path d="M563.9,417.7 L577.8,458.7 L589.7,498.4 L600.0,518.3"/><path d="M411.1,478.6 L423.0,518.3 L434.9,557.9 L431.0,600.0"/><path d="M498.4,339.7 L538.1,331.7 L577.8,339.7 L600.0,335.7"/><path d="M557.9,218.3 L554.0,248.0 L563.9,277.8 L557.9,300.0"/></g>
<g fill="none" stroke="#75787d" stroke-width="1.250" stroke-dasharray="4 3.500"><path d="M383.3,86.3 L399.2,87.3 L403.2,79.4 L411.1,79.4 L417.1,87.3 L409.1,99.2 L419.0,111.1 L429.0,107.1 L431.0,131.0 L446.8,142.9 L448.8,154.8 L468.7,160.7 L482.5,174.6 L492.5,182.5 L500.4,194.4 L502.4,206.3 L490.5,216.3 L476.6,224.2 L476.6,248.0 L480.6,265.9 L500.4,259.9 L508.3,269.8 L507.3,283.7 L518.3,291.7 L542.1,293.7"/><path d="M524.2,75.4 L530.2,93.3 L538.1,111.1 L534.1,142.9 L518.3,150.8 L508.3,160.7 L510.3,168.7 L520.2,172.6 L508.3,180.6 L492.5,182.5"/><path d="M585.7,63.5 L593.7,57.5 L600.0,63.5"/><path d="M573.8,113.1 L585.7,115.1 L591.7,103.2 L600.0,107.1"/><path d="M577.8,123.0 L587.7,131.0 L600.0,127.0"/><path d="M480.6,265.9 L460.7,273.8 L462.7,285.7 L456.7,300.0"/><path d="M490.5,300.0 L468.7,306.0 L456.7,321.8 L464.7,335.7 L468.7,351.6 L458.7,359.5"/><path d="M385.3,399.2 L399.2,393.3 L419.0,403.2 L421.0,393.3 L411.1,385.3"/><path d="M399.2,387.3 L407.1,395.2 L427.0,397.2"/><path d="M546.0,300.0 L557.9,306.0 L577.8,307.9 L600.0,304.0"/></g>
<path d="M245.0,0.0 L246.0,9.9 L265.9,49.6 L274.8,63.5 L267.9,67.5 L267.9,80.4 L275.8,83.3 L260.9,91.3 L259.9,95.2 L247.0,98.2 L238.1,94.2 L238.1,83.3 L207.3,91.3 L201.4,101.2 L180.6,101.2 L170.6,92.3 L152.8,93.3 L142.9,96.2 L136.9,93.3 L129.0,97.2 L124.0,92.3 L121.0,98.2 L119.0,90.3 L114.7,91.3 L114.1,116.1 L87.3,117.1 L85.3,119.0" fill="none" stroke="#2b2b2b" stroke-width="1.700" stroke-linejoin="round"/><path d="M85.3,119.0 L76.4,123.0 L73.4,138.9" fill="none" stroke="#2b2b2b" stroke-width="1.700" stroke-dasharray="5 3"/>
<rect x="28" y="0" width="1" height="600" fill="#a5dcee" opacity=".7"/>
<filter id="halo" x="-5%" y="-20%" width="110%" height="140%"><feMorphology in="SourceAlpha" operator="dilate" radius="1.500" result="d"/><feGaussianBlur in="d" stdDeviation=".400" result="b"/><feFlood flood-color="#fff"/><feComposite in2="b" operator="in" result="h"/><feMerge><feMergeNode in="h"/><feMergeNode in="SourceGraphic"/></feMerge></filter>
<g filter="url(#halo)">
<text x="-47.6" y="17.0" font-size="23.5" fill="#2f3337" textLength="79.6" lengthAdjust="spacingAndGlyphs" stroke="#2f3337" stroke-width=".65">Karachi</text>
<text x="-22.0" y="38.1" font-size="17" fill="#2f3337" stroke="#2f3337" stroke-width=".65">کراچی</text>
<text x="95.0" y="6.0" font-size="19.5" fill="#2f3337" textLength="108.0" lengthAdjust="spacingAndGlyphs" stroke="#2f3337" stroke-width=".65">Hyderabad</text>
<text x="208" y="182.300" font-size="19.300" fill="#5f6368" stroke="#5f6368" stroke-width=".350" textLength="106" lengthAdjust="spacing">GUJARAT</text>
<text x="101.0" y="219.9" font-size="16.5" fill="#3c4043" textLength="55.0" lengthAdjust="spacingAndGlyphs">Dwarka</text>
<text x="111.0" y="237.3" font-size="15.5" fill="#3c4043" textLength="36.0" lengthAdjust="spacingAndGlyphs">દ્વારકા</text>
<text x="166.0" y="219.9" font-size="16.5" fill="#3c4043" textLength="74.5" lengthAdjust="spacingAndGlyphs" stroke="#3c4043" stroke-width=".65">Jamnagar</text>
<text x="223.0" y="266.5" font-size="19.5" fill="#2f3337" textLength="59.0" lengthAdjust="spacingAndGlyphs" stroke="#2f3337" stroke-width=".65">Rajkot</text>
<text x="220.4" y="289.1" font-size="19" fill="#2f3337" textLength="66.6" lengthAdjust="spacingAndGlyphs" stroke="#2f3337" stroke-width=".65">રાજકોટ</text>
<text x="301.0" y="67.9" font-size="16.5" fill="#3c4043" textLength="79.4" lengthAdjust="spacingAndGlyphs">Mount Abu</text>
<text x="318.8" y="84.0" font-size="15.5" fill="#3c4043" textLength="63.5" lengthAdjust="spacingAndGlyphs">माउंट आबू</text>
<text x="424.0" y="46.8" font-size="17" fill="#3c4043" textLength="57.0" lengthAdjust="spacingAndGlyphs" stroke="#3c4043" stroke-width=".65">Udaipur</text>
<text x="428.6" y="62.3" font-size="16" fill="#3c4043" textLength="46.0" lengthAdjust="spacingAndGlyphs" stroke="#3c4043" stroke-width=".65">उदयपुर</text>
<text x="314.9" y="212.4" font-size="19.5" fill="#2f3337" textLength="120.4" lengthAdjust="spacingAndGlyphs" stroke="#2f3337" stroke-width=".65">Ahmedabad</text>
<text x="332.7" y="235.0" font-size="19" fill="#2f3337" textLength="84.3" lengthAdjust="spacingAndGlyphs" stroke="#2f3337" stroke-width=".65">અમદાવાદ</text>
<text x="366.5" y="290.7" font-size="19.5" fill="#2f3337" textLength="52.5" lengthAdjust="spacingAndGlyphs" stroke="#2f3337" stroke-width=".65">Surat</text>
<text x="371.2" y="314.9" font-size="19" fill="#2f3337" textLength="41.7" lengthAdjust="spacingAndGlyphs" stroke="#2f3337" stroke-width=".65">સુરત</text>
<text x="573.8" y="151.9" font-size="17" fill="#3c4043" textLength="48.2" lengthAdjust="spacingAndGlyphs" stroke="#3c4043" stroke-width=".65">Ujjain</text>
<text x="572.2" y="167.5" font-size="16" fill="#3c4043" textLength="47.8" lengthAdjust="spacingAndGlyphs" stroke="#3c4043" stroke-width=".65">उज्जैन</text>
<text x="567.9" y="235.2" font-size="19.5" fill="#2f3337" textLength="60.1" lengthAdjust="spacingAndGlyphs" stroke="#2f3337" stroke-width=".65">Indore</text>
<text x="575.8" y="258.8" font-size="19" fill="#2f3337" textLength="49.2" lengthAdjust="spacingAndGlyphs" stroke="#2f3337" stroke-width=".65">इन्दौर</text>
<text x="582.7" y="15.1" font-size="17" fill="#3c4043" textLength="37.3" lengthAdjust="spacingAndGlyphs" stroke="#3c4043" stroke-width=".65">कोटा</text>
<text x="381.0" y="356.5" font-size="16.5" fill="#3c4043" textLength="32.5" lengthAdjust="spacingAndGlyphs">Vapi</text>
<text x="384.3" y="373.1" font-size="15.5" fill="#3c4043" textLength="25.7" lengthAdjust="spacingAndGlyphs">વાપી</text>
<text x="424.0" y="376.4" font-size="19.5" fill="#2f3337" textLength="68.0" lengthAdjust="spacingAndGlyphs" stroke="#2f3337" stroke-width=".65">Nashik</text>
<text x="428.0" y="398.5" font-size="19" fill="#2f3337" textLength="59.5" lengthAdjust="spacingAndGlyphs" stroke="#2f3337" stroke-width=".65">नाशिक</text>
<text x="355.2" y="443.5" font-size="19.5" fill="#2f3337" textLength="81.7" lengthAdjust="spacingAndGlyphs" stroke="#2f3337" stroke-width=".65">Mumbai</text>
<text x="375.4" y="465.5" font-size="19" fill="#2f3337" textLength="39.6" lengthAdjust="spacingAndGlyphs" stroke="#2f3337" stroke-width=".65">मुंबई</text>
<text x="438.3" y="541.1" font-size="19.5" fill="#2f3337" textLength="49.8" lengthAdjust="spacingAndGlyphs" stroke="#2f3337" stroke-width=".65">Pune</text>
<text x="447.8" y="564.8" font-size="19" fill="#2f3337" textLength="28.8" lengthAdjust="spacingAndGlyphs" stroke="#2f3337" stroke-width=".65">पुणे</text>
<text x="520.8" y="326.9" font-size="17" fill="#3c4043" textLength="85.2" lengthAdjust="spacingAndGlyphs" stroke="#3c4043" stroke-width=".65">Chhatrapati</text>
<text x="531.0" y="343.8" font-size="17" fill="#3c4043" textLength="66.0" lengthAdjust="spacingAndGlyphs" stroke="#3c4043" stroke-width=".65">Sambhaji</text>
<text x="541.0" y="360.1" font-size="17" fill="#3c4043" textLength="45.0" lengthAdjust="spacingAndGlyphs" stroke="#3c4043" stroke-width=".65">Nagar</text>
<text x="538.0" y="377.3" font-size="16" fill="#3c4043" textLength="50.0" lengthAdjust="spacingAndGlyphs" stroke="#3c4043" stroke-width=".65">छत्रपती</text>
<text x="522.0" y="394.3" font-size="16" fill="#3c4043" textLength="90.0" lengthAdjust="spacingAndGlyphs" stroke="#3c4043" stroke-width=".65">संभाजीनगर</text>
<text x="524.2" y="410.0" font-size="16" fill="#3c4043" textLength="79.8" lengthAdjust="spacingAndGlyphs" stroke="#3c4043" stroke-width=".65">(औरंगाबाद)</text>
<text x="498.400" y="450.500" font-size="19.300" fill="#5f6368" stroke="#5f6368" stroke-width=".350" textLength="196" lengthAdjust="spacing">MAHARASHTRA</text>
</g>
<circle cx="87.0" cy="9.5" r="4.3" fill="#f2efe9" stroke="#2b2b2b" stroke-width="1.500"/>
<circle cx="129.0" cy="244.4" r="3.4" fill="#f2efe9" stroke="#2b2b2b" stroke-width="1.500"/>
<circle cx="203.4" cy="228.0" r="3.4" fill="#f2efe9" stroke="#2b2b2b" stroke-width="1.500"/>
<circle cx="254.4" cy="240.5" r="4.3" fill="#f2efe9" stroke="#2b2b2b" stroke-width="1.500"/>
<circle cx="385.0" cy="69.4" r="2.5" fill="#f2efe9" stroke="#2b2b2b" stroke-width="1.500"/>
<circle cx="452.4" cy="70.2" r="3.8" fill="#f2efe9" stroke="#2b2b2b" stroke-width="1.500"/>
<circle cx="375.0" cy="187.0" r="4.3" fill="#f2efe9" stroke="#2b2b2b" stroke-width="1.500"/>
<circle cx="392.5" cy="324.4" r="3.8" fill="#f2efe9" stroke="#2b2b2b" stroke-width="1.500"/>
<circle cx="594.0" cy="175.4" r="3.6" fill="#f2efe9" stroke="#2b2b2b" stroke-width="1.500"/>
<circle cx="597.6" cy="210.0" r="4.3" fill="#f2efe9" stroke="#2b2b2b" stroke-width="1.500"/>
<circle cx="598.6" cy="23.4" r="3.6" fill="#f2efe9" stroke="#2b2b2b" stroke-width="1.500"/>
<circle cx="397.2" cy="381.0" r="3.4" fill="#f2efe9" stroke="#2b2b2b" stroke-width="1.500"/>
<circle cx="458.1" cy="409.1" r="4.3" fill="#f2efe9" stroke="#2b2b2b" stroke-width="1.500"/>
<circle cx="395.2" cy="476.0" r="4.3" fill="#f2efe9" stroke="#2b2b2b" stroke-width="1.500"/>
<circle cx="462.7" cy="515.7" r="4.3" fill="#f2efe9" stroke="#2b2b2b" stroke-width="1.500"/>
<circle cx="563.9" cy="417.7" r="3.6" fill="#f2efe9" stroke="#2b2b2b" stroke-width="1.500"/>
<path d="M300.300,299.300 c-1.200,0 -2,-1.500 -2.500,-4 c-1.500,-7.500 -5,-12 -10,-18.500 c-4,-5 -6.700,-8.500 -6.700,-13.500 a19.300,19.300 0 0 1 38.600,0 c0,5 -2.700,8.500 -6.700,13.500 c-5,6.500 -8.500,11 -10,18.500 c-.500,2.500 -1.300,4 -2.700,4z" fill="#ea4335" stroke="#c5221f" stroke-width=".800"/><circle cx="300.400" cy="264.400" r="7.400" fill="#b31412"/>
</svg>
<div class="abs" style="left:872px;top:331px;width:252px;height:60px;background:#fff;border-radius:3px;box-shadow:0 1.500px 6px -1px rgba(0,0,0,.3)"></div>
<div class="abs" style="left:975px;top:331px;width:1px;height:60px;background:#e6e6e6"></div>
<div class="abs" style="left:898px;top:343px;font-size:27px;line-height:36px;color:#000;-webkit-text-stroke:.9px #000;white-space:nowrap;letter-spacing:-.100px">Map</div>
<div class="abs" style="left:1002px;top:343px;font-size:27px;line-height:36px;color:#565656;white-space:nowrap;letter-spacing:0">Satellite</div>
<div class="abs" style="left:1382px;top:331px;width:60px;height:60px;background:#fff;border-radius:3px;box-shadow:0 1.500px 6px -1px rgba(0,0,0,.3)"></div>
<svg class="abs" style="left:1382px;top:331px" width="60" height="60" fill="none" stroke="#666" stroke-width="3.400"><path d="M18.500,27 V18.500 H27 M33,18.500 H41.500 V27 M41.500,33 V41.500 H33 M27,41.500 H18.500 V33"/></svg>
<div class="abs" style="left:1382px;top:651px;width:60px;height:60px;background:#fff;border-radius:3px;box-shadow:0 1.500px 6px -1px rgba(0,0,0,.3)"></div>
<svg class="abs" style="left:1382px;top:651px" width="60" height="60"><circle cx="29.500" cy="16.500" r="7.300" fill="#fbbc25"/><path d="M20.500,27.500 c0,-2.500 2,-3.500 4,-3.500 h10 c2,0 4,1 4,3.500 l2.500,13 c.3,1.500 -1.800,2 -2.300,.500 l-2.700,-8.500 v18.500 h-4.500 l-1,-12.500 h-2 l-1,12.500 h-4.500 v-18.500 l-2.700,8.500 c-.500,1.500 -2.600,1 -2.300,-.500z" fill="#fbbc25"/><path d="M24.500,24 h10 l-5,7.500z" fill="#e37b1f"/></svg>
<div class="abs" style="left:1382px;top:760px;width:60px;height:120px;background:#fff;border-radius:3px;box-shadow:0 1.500px 6px -1px rgba(0,0,0,.3)"></div>
<div class="abs" style="left:1389px;top:819px;width:46px;height:1px;background:#e6e6e6"></div>
<svg class="abs" style="left:1382px;top:760px" width="60" height="120" fill="#666"><rect x="16.500" y="27" width="27" height="4.600"/><rect x="27.700" y="16" width="4.600" height="27"/><rect x="16.500" y="87.500" width="27" height="4.600"/></svg>
<svg class="abs" style="left:866px;top:874px" width="100" height="42" font-family="Liberation Sans, sans-serif" font-size="30" font-weight="bold" stroke="#e3f6fb" stroke-width="3" stroke-linejoin="round" style="paint-order:stroke" paint-order="stroke"><text x="5.600" y="30.400" textLength="84.500" lengthAdjust="spacingAndGlyphs"><tspan fill="#4285f4">G</tspan><tspan fill="#ea4335">o</tspan><tspan fill="#fbbc05">o</tspan><tspan fill="#4285f4">g</tspan><tspan fill="#34a853">l</tspan><tspan fill="#ea4335">e</tspan></text></svg>
<div class="abs" style="left:1069px;top:895px;width:145.500px;height:21px;background:rgba(245,245,245,.720)"></div>
<div class="abs" style="left:1217px;top:895px;width:240px;height:21px;background:rgba(245,245,245,.720)"></div>
<div class="abs" style="left:1077.500px;top:896.800px;font-size:14.900px;line-height:20px;color:#222;white-space:nowrap">Keyboard shortcuts</div>
<div class="abs" style="left:1224.500px;top:896.800px;font-size:14.900px;line-height:20px;color:#222;white-space:nowrap">Map data ©2024 Google</div>
<div class="abs" style="left:1406.500px;top:896.800px;font-size:14.900px;line-height:20px;color:#222;white-space:nowrap">Terms</div>
<!--MAP-END-->
<!--APP2-END-->

<!-- ======= TASKBAR ======= -->
<div id="taskbar" class="abs"></div>
<!--TASKBAR-START-->
<div class="abs" style="left:0;top:1528px;width:2560px;height:2px;background:#34364b"></div>
<svg class="abs" style="left:0;top:1527px" width="2560" height="73" viewBox="0 1527 2560 73">
 <defs>
  <linearGradient id="gsun" x1="0" y1="0" x2="0" y2="1"><stop offset="0" stop-color="#ffc414"/><stop offset="1" stop-color="#f2680c"/></linearGradient>
  <linearGradient id="gwin" x1="0" y1="0" x2="1" y2="1"><stop offset="0" stop-color="#6fd6ff"/><stop offset="1" stop-color="#1593e6"/></linearGradient>
  <linearGradient id="gcopl" x1="0" y1="0" x2="0" y2="1"><stop offset="0" stop-color="#1b7bea"/><stop offset=".35" stop-color="#2bb3d8"/><stop offset=".6" stop-color="#43c66e"/><stop offset="1" stop-color="#f5d327"/></linearGradient><linearGradient id="gcopr" x1="0" y1="0" x2="0" y2="1"><stop offset="0" stop-color="#a965f2"/><stop offset=".5" stop-color="#ee5f9e"/><stop offset="1" stop-color="#ffa53c"/></linearGradient>
  <radialGradient id="gsph" cx=".35" cy=".3" r=".8"><stop offset="0" stop-color="#7d808c"/><stop offset=".55" stop-color="#2c2d36"/><stop offset="1" stop-color="#0c0c10"/></radialGradient><linearGradient id="gfold" x1="0" y1="0" x2="0" y2="1"><stop offset="0" stop-color="#ffd667"/><stop offset="1" stop-color="#f4b228"/></linearGradient>
 </defs>
 <!-- weather -->
 <circle cx="47" cy="1563" r="15.500" fill="url(#gsun)"/>
 <path d="M40,1552 h24 M35,1558 h21 M30,1565.500 h28 M40,1565.500 h0 M36,1572 h22 M30,1572 h0" stroke="#8d8f96" stroke-width="2.600" stroke-linecap="round"/>
 <path d="M50,1552 h14 M29,1565.500 h20 M30,1572 h26" stroke="#7a7c84" stroke-width="2.600" stroke-linecap="round"/>
 <!-- start -->
 <rect x="798" y="1547" width="16" height="16" rx="1.500" fill="url(#gwin)"/><rect x="816.500" y="1547" width="16" height="16" rx="1.500" fill="url(#gwin)"/><rect x="798" y="1565.500" width="16" height="16" rx="1.500" fill="url(#gwin)"/><rect x="816.500" y="1565.500" width="16" height="16" rx="1.500" fill="url(#gwin)"/>
 <!-- search -->
 <rect x="853" y="1541" width="328" height="46" rx="23" fill="#34374e" stroke="#4b4e66" stroke-width="1.500"/>
 <rect x="1100" y="1545" width="77" height="38" rx="19" fill="#45475d"/>
 <circle cx="879" cy="1562.500" r="8" fill="none" stroke="#fff" stroke-width="2.200"/><path d="M885,1568.500 l6.500,6.500" stroke="#fff" stroke-width="2.400" stroke-linecap="round"/>
 <rect x="1122" y="1556" width="34" height="21" rx="3" fill="#d98a1e"/><rect x="1122" y="1556" width="34" height="9" rx="3" fill="#b56a12"/><path d="M1133,1556 v-3.500 h12 v3.500" fill="none" stroke="#8a4a0c" stroke-width="2"/><rect x="1136.500" y="1563" width="5" height="5" fill="#ffd34d"/>
 <!-- task view -->
 <rect x="1200" y="1556.500" width="26.500" height="24" rx="3" fill="#5e5e61"/><rect x="1209" y="1547.500" width="27" height="24" rx="3" fill="#f3f3f5"/><path d="M1209,1556.500 h17.500 v15 h-14.500 a3,3 0 0 1 -3,-3z" fill="#c4c4c6"/>
 <!-- copilot -->
 <path d="M1272.600,1548.500 q1,-1.300 3,-1.300 h11 q5,0 6.500,5.800 h-6.500 l-4.500,14.500 q-1,3.500 -4.500,3.500 h-6.500 q-5.500,0 -4,-5.500 l4,-13.500 q.600,-2.200 1.500,-3.500z" fill="url(#gcopl)"/>
 <path d="M1289.500,1557 h7.500 q5.500,0 4,5.500 l-3.700,12.500 q-1.400,4.600 -6,4.600 h-11.500 q-4,0 -5.300,-5.600 h7 q2.500,0 3.300,-2.700z" fill="url(#gcopr)"/>
 <!-- L -->
 <rect x="1332" y="1546" width="36" height="36" fill="#1e3cab"/><path d="M1343,1573.500 l3,-13 v10 h12 v3z" fill="#0b2a5c"/><path d="M1347.600,1553 v17 h11.200" fill="none" stroke="#fff" stroke-width="5"/>
 <!-- explorer -->
 <path d="M1398,1550 h13 l4,4 h17 a2,2 0 0 1 2,2 v22 a2,2 0 0 1 -2,2 h-32 a2,2 0 0 1 -2,-2z" fill="#e9a81e"/><rect x="1398" y="1557" width="36" height="23" rx="2" fill="url(#gfold)"/><path d="M1404,1580 v-7 a3,3 0 0 1 3,-3 h17 a3,3 0 0 1 3,3 v7z" fill="#1b86dd"/><rect x="1408.500" y="1574.300" width="14" height="2.200" rx="1" fill="#0c5fb0"/>
 <!-- brave -->
 <g><path d="M1471,1549.500 l3.500,-3.700 h16 l3.500,3.700 l3.300,4.500 l-1.300,5.500 l-4.500,14.500 l-9,8.200 l-9,-8.200 l-4.500,-14.500 l-1.300,-5.500z" fill="#fd4a1c"/><path d="M1473.300,1556.300 l4.200,-2.300 l5,1.200 l5,-1.200 l4.200,2.300 l-1.800,4.400 l1.400,4.200 l-4.800,6.800 l-4,3.800 l-4,-3.800 l-4.800,-6.800 l1.400,-4.200z" fill="#fff"/><path d="M1476.500,1559.500 l3.500,1 M1488.500,1559.500 l-3.500,1 M1482.500,1559.500 v6.500 l-2.500,2 M1482.500,1566 l2.500,2 M1480.300,1571 l2.200,1.300 l2.200,-1.300" stroke="#fd4a1c" stroke-width="1.500" fill="none"/></g>
 <!-- teams -->
 <circle cx="1563" cy="1558" r="4" fill="#5b63cf"/><path d="M1558,1563.500 h8.500 a2,2 0 0 1 2,2 v6.500 a5,5 0 0 1 -5,5 h-5.500z" fill="#5b63cf"/>
 <circle cx="1550.500" cy="1553.500" r="6" fill="#7b83eb"/><path d="M1541,1562 a2.500,2.500 0 0 1 2.500,-2.500 h14 a2.500,2.500 0 0 1 2.500,2.500 v9 a9.500,9.500 0 0 1 -19,0z" fill="#7b83eb"/>
 <rect x="1530" y="1555" width="18" height="18" rx="2" fill="#4a52bd"/><path d="M1534.500,1559.800 h9 M1539,1559.800 v9.700" stroke="#fff" stroke-width="2.100"/>
 <circle cx="1562" cy="1551" r="10.300" fill="#13a10e"/><path d="M1557.500,1551 l3.200,3.200 l5.600,-6" fill="none" stroke="#1c1e35" stroke-width="2"/>
 <!-- vscode -->
 <path d="M1622,1546 l10,4.500 v27 l-10,4.500 l-19,-17 l-5,4 l-2.500,-2 v-6 l2.500,-2 l5,4z M1622,1555.500 l-11,8.500 l11,8.500z" fill="#23a7f2" fill-rule="evenodd"/><path d="M1622,1546 l10,4.500 v27 l-10,4.500z" fill="#1481cf"/>
 <!-- spotify -->
 <circle cx="1681" cy="1564" r="17" fill="#1ed760"/><path d="M1671.500,1557.500 c7,-2 14,-1.500 20,1.500 M1672.500,1564 c6,-1.700 11.500,-1.200 17,1.500 M1673.500,1570 c5,-1.300 9,-1 13.500,1" fill="none" stroke="#10131c" stroke-width="2.800" stroke-linecap="round"/>
 <!-- active brave -->
 <rect x="1717" y="1534" width="59" height="60" rx="6" fill="#2d2f47" stroke="#3a3c55" stroke-width="1"/>
 <g transform="translate(263.500,0)"><path d="M1471,1549.500 l3.500,-3.700 h16 l3.500,3.700 l3.300,4.500 l-1.300,5.500 l-4.500,14.500 l-9,8.200 l-9,-8.200 l-4.500,-14.500 l-1.300,-5.500z" fill="#fd4a1c"/><path d="M1473.300,1556.300 l4.200,-2.300 l5,1.200 l5,-1.200 l4.200,2.300 l-1.800,4.400 l1.400,4.200 l-4.800,6.800 l-4,3.800 l-4,-3.800 l-4.800,-6.800 l1.400,-4.200z" fill="#fff"/><path d="M1476.500,1559.500 l3.500,1 M1488.500,1559.500 l-3.500,1 M1482.500,1559.500 v6.500 l-2.500,2 M1482.500,1566 l2.500,2 M1480.300,1571 l2.200,1.300 l2.200,-1.300" stroke="#fd4a1c" stroke-width="1.500" fill="none"/></g>
 <circle cx="1760" cy="1550.500" r="11.500" fill="url(#gsph)"/><path d="M1750,1555 L1771,1543.500 M1755,1541.500 L1766,1552" stroke="#d4d4da" stroke-width="1.300" opacity=".85"/>
 <rect x="1544.500" y="1589" width="8" height="3.500" rx="1.700" fill="#8b8d9c"/><rect x="1610.500" y="1589" width="8" height="3.500" rx="1.700" fill="#8b8d9c"/><rect x="1677" y="1589" width="8" height="3.500" rx="1.700" fill="#8b8d9c"/>
 <rect x="1734" y="1588.500" width="24" height="4" rx="2" fill="#4cc2ff"/>
 <!-- tray -->
 <path d="M2171.500,1568 l8,-8 l8,8" fill="none" stroke="#fff" stroke-width="2.300"/>
 <g fill="none" stroke="#fff" stroke-width="1.700">
  <path d="M2304,1568 v-15 h-21.500 v20 h14"/><path d="M2290,1573 v4.500 M2285.500,1577.500 h14"/><rect x="2299" y="1554.500" width="6" height="9" rx="1.500"/><path d="M2302,1563.500 v15"/>
  <path d="M2318,1559.500 h4.500 l6,-5 v19 l-6,-5 h-4.500z"/><path d="M2331.500,1559.500 a6,6 0 0 1 0,9 M2334.500,1556.500 a10,10 0 0 1 0,15 M2337.500,1553.500 a14,14 0 0 1 0,21" stroke-width="1.500"/>
  <rect x="2354" y="1556.500" width="21" height="14.500" rx="3.500" stroke-width="1.800"/><rect x="2357" y="1559.500" width="3" height="8.500" fill="#fff" stroke="none"/><path d="M2377.500,1561 v5.500" stroke-width="3" stroke-linecap="round"/>
 </g>
 <path d="M2509,1571 c2,-2 2,-4 2,-8.500 a7.500,7.500 0 0 1 15,0 c0,4.500 0,6.500 2,8.500 a1,1 0 0 1 -.8,1.700 h-17.400 a1,1 0 0 1 -.8,-1.700z M2514.500,1574.500 h8 a4,4 0 0 1 -8,0z" fill="#6fd3f7"/>
</svg>
<div class="abs tb" style="left:76px;top:1541px;font-size:17.300px;line-height:22px">29°C</div>
<div class="abs tb" style="left:76px;top:1565px;font-size:17.700px;line-height:22px;color:#d9d9e0">Smoke</div>
<div class="abs tb" style="left:908px;top:1552px;font-size:18.900px;line-height:24px;color:#e4e4ea">Search</div>
<div class="abs tb" style="left:2206px;top:1543px;width:60px;text-align:center;font-size:16.300px;line-height:22px">ENG</div>
<div class="abs tb" style="left:2206px;top:1566px;width:60px;text-align:center;font-size:16.300px;line-height:22px">US</div>
<div class="abs tb" style="left:2380px;top:1540.500px;width:115px;text-align:right;font-size:17.300px;line-height:22px">12:04</div>
<div class="abs tb" style="left:2380px;top:1565px;width:115px;text-align:right;font-size:18.200px;line-height:22px">25-11-2024</div>
<!--TASKBAR-END-->

</div>
</body>
</html>
